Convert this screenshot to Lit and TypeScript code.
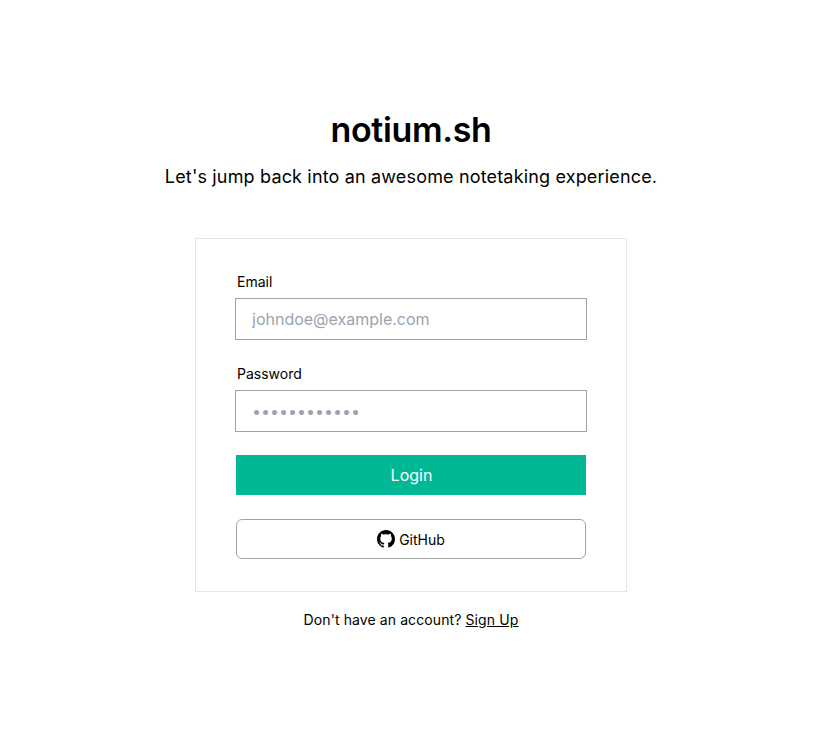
import { LitElement, html, css } from "lit";
import { customElement } from "lit/decorators.js";

@customElement("app-root")
export class AppRoot extends LitElement {
  static styles = css`
    :host {
      display: block;
      min-height: 740px;
      background: #fff;
      color: #000;
      font-family: Inter, "Liberation Sans", sans-serif;
      font-size: 14px;
      line-height: 20px;
      letter-spacing: 0.007em;
    }
    * { box-sizing: border-box; }
    .page {
      display: flex;
      flex-direction: column;
      align-items: center;
      padding: 110px 0 0 7px;
    }
    h1 {
      margin: 0;
      font-size: 34px;
      line-height: 40px;
      font-weight: 600;
      letter-spacing: -0.01em;
    }
    .sub {
      margin: 13px 0 0;
      font-size: 18px;
      line-height: 28px;
      letter-spacing: 0.009em;
    }
    .card {
      width: 432px;
      margin-top: 47px;
      padding: 33px 40px 32px;
      border: 1px solid #e5e5e5;
      display: flex;
      flex-direction: column;
    }
    label {
      display: block;
      font-size: 14px;
      line-height: 20px;
      padding-left: 1px;
      margin-bottom: 6px;
      letter-spacing: 0;
    }
    .input {
      display: block;
      width: 352px;
      height: 42px;
      margin: 0 -1px 24px;
      padding: 0 16px;
      border: 1px solid #a3a3a3;
      border-radius: 0;
      outline: none;
      font: inherit;
      font-size: 16px;
      letter-spacing: 0;
      color: #000;
      background: #fff;
    }
    .input::placeholder { color: #9ca3af; opacity: 1; }
    .login {
      height: 40px;
      margin-top: -1px;
      border: 0;
      background: #00b894;
      color: #fff;
      font: inherit;
      font-size: 16px;
      padding: 0 0 0 1px;
      letter-spacing: 0;
    }
    .github {
      height: 40px;
      margin-top: 24px;
      border: 1px solid #a3a3a3;
      border-radius: 6px;
      background: #fff;
      color: #000;
      font: inherit;
      font-size: 14px;
      display: flex;
      align-items: center;
      justify-content: center;
      gap: 4px;
      padding: 0;
    }
    .github svg { width: 18px; height: 18px; display: block; }
    .github span { padding-top: 2px; }
    .foot {
      margin: 18px 0 0;
      font-size: 14px;
      line-height: 20px;
    }
    .foot a { color: #000; text-decoration: underline; }
  `;

  render() {
    return html`
      <div class="page">
        <h1>notium.sh</h1>
        <p class="sub">Let's jump back into an awesome notetaking experience.</p>
        <form class="card" @submit=${(e: Event) => e.preventDefault()}>
          <label for="email">Email</label>
          <input class="input" id="email" type="email" placeholder="johndoe@example.com" />
          <label for="password">Password</label>
          <input class="input" id="password" type="password" placeholder="••••••••••••" />
          <button class="login" type="submit">Login</button>
          <button class="github" type="button">
            <svg viewBox="0 0 16 16" fill="#000" aria-hidden="true"><path d="M8 0C3.58 0 0 3.58 0 8c0 3.54 2.29 6.53 5.47 7.59.4.07.55-.17.55-.38 0-.19-.01-.82-.01-1.49-2.01.37-2.53-.49-2.69-.94-.09-.23-.48-.94-.82-1.13-.28-.15-.68-.52-.01-.53.63-.01 1.08.58 1.23.82.72 1.21 1.87.87 2.33.66.07-.52.28-.87.51-1.07-1.78-.2-3.64-.89-3.64-3.95 0-.87.31-1.59.82-2.15-.08-.2-.36-1.02.08-2.12 0 0 .67-.21 2.2.82.64-.18 1.32-.27 2-.27.68 0 1.36.09 2 .27 1.53-1.04 2.2-.82 2.2-.82.44 1.1.16 1.92.08 2.12.51.56.82 1.27.82 2.15 0 3.07-1.87 3.75-3.65 3.95.29.25.54.73.54 1.48 0 1.07-.01 1.93-.01 2.2 0 .21.15.46.55.38A8.013 8.013 0 0016 8c0-4.42-3.58-8-8-8z"/></svg>
            <span>GitHub</span>
          </button>
        </form>
        <p class="foot">Don't have an account? <a href="#">Sign Up</a></p>
      </div>
    `;
  }
}
